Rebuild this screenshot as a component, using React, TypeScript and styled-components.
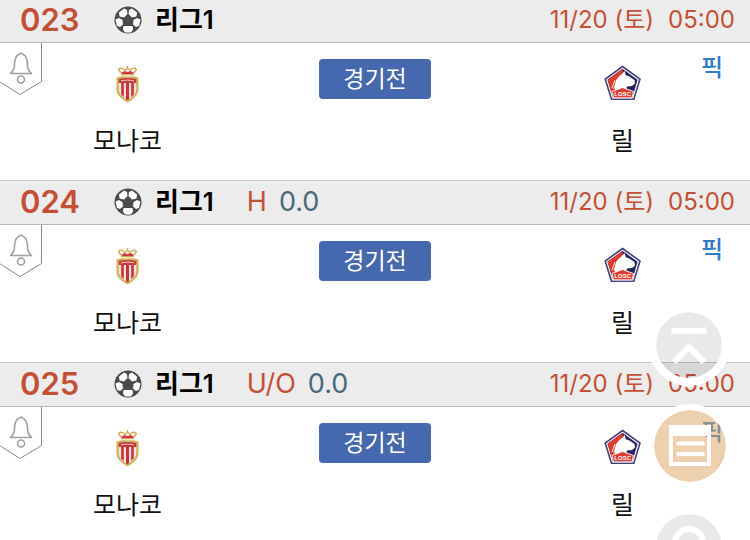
import React from "react";
import styled, { createGlobalStyle } from "styled-components";

const GlobalStyle = createGlobalStyle`
  * { box-sizing: border-box; }
  html, body { margin: 0; background: #fff; }
  body {
    overflow: hidden;
    color: #111;
    font-family: Inter, "Noto Sans CJK KR", sans-serif;
    font-size: 24px;
  }
  button { border: 0; padding: 0; background: none; font: inherit; cursor: pointer; }
  svg { display: block; }
`;

const MatchList = styled.main`
  margin-top: -2px;
`;

const MatchHeader = styled.header`
  display: flex;
  align-items: center;
  height: 45px;
  padding: 0 15px 2px 20px;
  background: #ececec;
  border-top: 1px solid #c6c6c6;
  border-bottom: 1px solid #b8b8b8;
  line-height: 40px;
  white-space: nowrap;
`;

const MatchNumber = styled.span`
  width: 94px;
  color: #c35035;
  font-size: 31px;
  font-weight: 600;
`;

const League = styled.h2`
  margin: 0 0 0 13px;
  color: #000;
  font-size: 26px;
  font-weight: 600;
`;

const Market = styled.span`
  display: flex;
  gap: 12px;
  margin-left: 33px;
  font-size: 27px;
`;

const MarketType = styled.span`
  color: #c35035;
`;

const MarketValue = styled.span`
  color: #46697b;
`;

const Kickoff = styled.time`
  display: flex;
  align-items: baseline;
  gap: 14px;
  margin-left: auto;
  color: #c35035;
  font-size: 24px;
`;

const MatchBody = styled.div`
  position: relative;
  display: grid;
  grid-template-columns: 34fr 32fr 34fr;
  height: 137px;
`;

const Team = styled.div`
  display: flex;
  flex-direction: column;
  align-items: center;
  gap: 23px;
  padding-top: 22px;
  font-size: 25px;
  line-height: 30px;
`;

const StatusCell = styled.div`
  display: flex;
  justify-content: center;
  align-items: flex-start;
  padding-top: 16px;
`;

const Status = styled.span`
  min-width: 112px;
  border-radius: 4px;
  background: #4668ae;
  color: #fff;
  font-size: 23px;
  line-height: 40px;
  text-align: center;
`;

const AlarmButton = styled.button`
  position: absolute;
  top: 0;
  left: 0;
`;

const PickLink = styled.a`
  position: absolute;
  top: 9px;
  right: 27px;
  color: #2f7cc8;
  font-weight: 500;
  line-height: 32px;
  text-decoration: none;
`;

const FloatingMenu = styled.nav`
  position: fixed;
  right: 18px;
  bottom: -48px;
  display: flex;
  flex-direction: column;
  gap: 18px;
  width: 84px;
`;

const FloatingButton = styled.button<{ $accent?: boolean }>`
  display: grid;
  place-items: center;
  width: ${(p) => (p.$accent ? 84 : 82)}px;
  height: ${(p) => (p.$accent ? 84 : 82)}px;
  border: ${(p) => (p.$accent ? 6 : 8)}px solid #fff;
  border-radius: 50%;
  background: ${(p) => (p.$accent ? "rgba(219, 163, 93, 0.5)" : "rgba(0, 0, 0, 0.085)")};
  background-clip: padding-box;
`;

function BallIcon() {
  return (
    <svg width="28" height="28" viewBox="0 0 28 28" aria-hidden="true">
      <circle cx="14" cy="14" r="13.5" fill="#4b4b4b" />
      <g fill="#fff">
        <path d="M5 6.5 10 2.500l3 1.500.5 4-3.500 3.500-4.500-1z" />
        <path d="M23 6.500 18 2.500 15 4l-.5 4 3.500 3.500 4.500-1z" />
        <path d="m1.500 13.500 3.500-1.500 3.500 2 .5 4.500-3 2.500-3-1z" />
        <path d="m26.500 13.500-3.500-1.500-3.500 2-.5 4.500 3 2.500 3-1z" />
        <path d="M9.500 20h9l.5 3.500-2 3h-6l-2-3z" />
      </g>
    </svg>
  );
}

function AlarmRibbon() {
  return (
    <svg width="42" height="54" viewBox="0 0 42 54" fill="none" aria-hidden="true">
      <path d="M41.500 0v38.500L20 51.500-.5 38.500" fill="#fff" stroke="#888" />
      <g stroke="#a0a0a0" strokeWidth="1.600">
        <path d="M10.500 30.500c1.500-1.500 4-3.500 4-8.500 0-6 1-9.500 5-11a1.600 1.600 0 0 1 3 0c4 1.500 5 5 5 11 0 5 2.500 7 4 8.500z" strokeLinejoin="round" />
        <circle cx="21" cy="36.500" r="3.500" />
      </g>
    </svg>
  );
}

function MonacoCrest() {
  return (
    <svg width="24" height="38" viewBox="0 0 24 38" role="img" aria-label="AS 모나코">
      <g fill="none" stroke="#d0aa50" strokeWidth="1.300">
        <path d="M5 9.500h13M5 8 2.500 4.500c2-2 5-1.500 6.500 1L11.500 3 14 5.500c1.500-2.500 4.500-3 6.500-1L18 8M11.500 1v3" />
      </g>
      <path d="M5.500 7.500 8.500 6l3 1 3-1 3 1.500V9h-12z" fill="#d13a3e" />
      <path d="M.5 12.500Q6 10.500 11.500 11.500q5-1 11 1V24c0 6-5 10-11 13.500C5.500 34 .5 30 .5 24z" fill="#d4b159" />
      <path d="M2.800 18h17.400v6c0 5-4 8.500-8.700 11.200C6.800 32.500 2.800 29 2.800 24z" fill="#f5e3df" />
      <path d="M5.200 18h2.600v14L5.200 29.500zM10 18h3v16.400l-1.500.8-1.500-.8zM15.200 18h2.600v11.500L15.200 32z" fill="#cd3037" />
      <path d="M2.800 14q8.700-2 17.400 0v4H2.800z" fill="#c93a3d" />
      <path d="M5 15.800q6.500-1.500 13 0" fill="none" stroke="#f2d3c8" />
    </svg>
  );
}

const CrestText = styled.text`
  font-family: "Liberation Sans", sans-serif;
  font-size: 6px;
  font-weight: 700;
`;

function LilleCrest() {
  return (
    <svg width="38" height="38" viewBox="0 0 38 38" role="img" aria-label="LOSC 릴">
      <path d="M18.500 1.500 36 14 29.800 34.300H7.500L1.200 14z" fill="#fff" stroke="#45437a" strokeWidth="1.600" />
      <path d="M18.500 3.800 33.600 14.800 28.300 32.700H9L3.500 14.800z" fill="#27255f" />
      <path d="M18.500 3.800 3.500 14.800 7.500 28l4-3L19 12z" fill="#df3b30" />
      <path d="M11 25.500c-.5-7 .5-12 6.500-16l3-3.500 1.500 4.500c4 .5 5 2.500 8.500 4.500l.5 3.500-3 2.500-5 .5c-1 2 0 3 1 5l-5-2.500z" fill="#fff" />
      <path d="m8 23 3-8M9.800 24l3.500-10" stroke="#fff" strokeWidth=".9" />
      <path d="M8 26.500 18.500 22.500 29.500 26.500 28 32.800H9.500z" fill="#df3b30" stroke="#fff" strokeWidth=".9" />
      <CrestText x="18.7" y="31.300" textAnchor="middle" fill="#fff">LOSC</CrestText>
    </svg>
  );
}

function TopIcon() {
  return (
    <svg width="36" height="38" viewBox="0 0 36 38" fill="none" aria-hidden="true">
      <path d="M0.500 5h35" stroke="#fff" strokeWidth="6" />
      <path d="m3 36 15-15 15 15" stroke="#fff" strokeWidth="6" />
    </svg>
  );
}

function SlipIcon() {
  return (
    <svg width="44" height="42" viewBox="0 0 44 42" fill="none" aria-hidden="true">
      <path fillRule="evenodd" d="M1 0h42v41H1zM5 11v26h34V11z" fill="#fff" />
      <path d="M10 18.500h25M10 29h25" stroke="#fff" strokeWidth="4" strokeLinecap="round" />
    </svg>
  );
}

function SearchIcon() {
  return (
    <svg width="44" height="44" viewBox="0 0 44 44" fill="none" aria-hidden="true">
      <circle cx="22" cy="18" r="14" stroke="#fff" strokeWidth="6" />
      <path d="m31 29 9 9" stroke="#fff" strokeWidth="6" />
    </svg>
  );
}

type MatchInfo = { number: string; market?: string; value?: string };

const matches: MatchInfo[] = [
  { number: "023" },
  { number: "024", market: "H", value: "0.0" },
  { number: "025", market: "U/O", value: "0.0" },
];

function MatchRow({ number, market, value }: MatchInfo) {
  return (
    <section>
      <MatchHeader>
        <MatchNumber>{number}</MatchNumber>
        <BallIcon />
        <League>리그1</League>
        {market && (
          <Market>
            <MarketType>{market}</MarketType>
            <MarketValue>{value}</MarketValue>
          </Market>
        )}
        <Kickoff>
          <span>11/20 (토)</span>
          <span>05:00</span>
        </Kickoff>
      </MatchHeader>
      <MatchBody>
        <Team>
          <MonacoCrest />
          모나코
        </Team>
        <StatusCell>
          <Status>경기전</Status>
        </StatusCell>
        <Team>
          <LilleCrest />
          릴
        </Team>
        <AlarmButton aria-label="알림">
          <AlarmRibbon />
        </AlarmButton>
        <PickLink href="#pick">픽</PickLink>
      </MatchBody>
    </section>
  );
}

export default function App() {
  return (
    <>
      <GlobalStyle />
      <MatchList>
        {matches.map((match) => (
          <MatchRow key={match.number} {...match} />
        ))}
      </MatchList>
      <FloatingMenu>
        <FloatingButton aria-label="맨 위로">
          <TopIcon />
        </FloatingButton>
        <FloatingButton $accent aria-label="목록">
          <SlipIcon />
        </FloatingButton>
        <FloatingButton aria-label="검색">
          <SearchIcon />
        </FloatingButton>
      </FloatingMenu>
    </>
  );
}
